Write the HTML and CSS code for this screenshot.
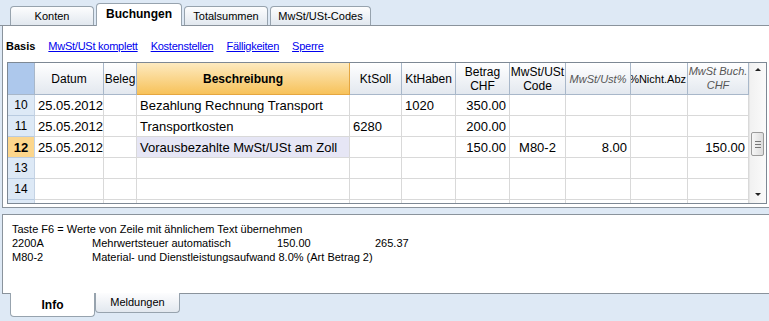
FILE: index.html
```html
<!DOCTYPE html>
<html lang="de">
<head>
  <meta charset="UTF-8">
  <title>Buchungen</title>
  <link rel="stylesheet" href="styles.css">
</head>
<body>
  <div class="top-tabs">
    <div class="tab">Konten</div>
    <div class="tab active">Buchungen</div>
    <div class="tab">Totalsummen</div>
    <div class="tab wide">MwSt/USt-Codes</div>
  </div>

  <div class="main-panel">
    <div class="links">
      <b>Basis</b>
      <a href="#">MwSt/USt komplett</a>
      <a href="#">Kostenstellen</a>
      <a href="#">Fälligkeiten</a>
      <a href="#">Sperre</a>
    </div>

    <div class="grid">
      <div class="table">
        <div class="row head">
          <div class="cell num"></div>
          <div class="cell">Datum</div>
          <div class="cell">Beleg</div>
          <div class="cell focus">Beschreibung</div>
          <div class="cell">KtSoll</div>
          <div class="cell">KtHaben</div>
          <div class="cell">Betrag<br>CHF</div>
          <div class="cell">MwSt/USt<br>Code</div>
          <div class="cell calc">MwSt/Ust%</div>
          <div class="cell clip"><span>%Nicht.Abz</span></div>
          <div class="cell calc top">MwSt Buch.<br>CHF</div>
        </div>
        <div class="row">
          <div class="cell num">10</div>
          <div class="cell">25.05.2012</div>
          <div class="cell"></div>
          <div class="cell">Bezahlung Rechnung Transport</div>
          <div class="cell"></div>
          <div class="cell">1020</div>
          <div class="cell r">350.00</div>
          <div class="cell"></div>
          <div class="cell"></div>
          <div class="cell"></div>
          <div class="cell"></div>
        </div>
        <div class="row">
          <div class="cell num">11</div>
          <div class="cell">25.05.2012</div>
          <div class="cell"></div>
          <div class="cell">Transportkosten</div>
          <div class="cell">6280</div>
          <div class="cell"></div>
          <div class="cell r">200.00</div>
          <div class="cell"></div>
          <div class="cell"></div>
          <div class="cell"></div>
          <div class="cell"></div>
        </div>
        <div class="row current">
          <div class="cell num">12</div>
          <div class="cell">25.05.2012</div>
          <div class="cell"></div>
          <div class="cell sel">Vorausbezahlte MwSt/USt am Zoll</div>
          <div class="cell"></div>
          <div class="cell"></div>
          <div class="cell r">150.00</div>
          <div class="cell c">M80-2</div>
          <div class="cell r">8.00</div>
          <div class="cell"></div>
          <div class="cell r">150.00</div>
        </div>
        <div class="row">
          <div class="cell num">13</div>
          <div class="cell"></div><div class="cell"></div><div class="cell"></div>
          <div class="cell"></div><div class="cell"></div><div class="cell"></div>
          <div class="cell"></div><div class="cell"></div><div class="cell"></div>
          <div class="cell"></div>
        </div>
        <div class="row">
          <div class="cell num">14</div>
          <div class="cell"></div><div class="cell"></div><div class="cell"></div>
          <div class="cell"></div><div class="cell"></div><div class="cell"></div>
          <div class="cell"></div><div class="cell"></div><div class="cell"></div>
          <div class="cell"></div>
        </div>
        <div class="row">
          <div class="cell num"></div>
          <div class="cell"></div><div class="cell"></div><div class="cell"></div>
          <div class="cell"></div><div class="cell"></div><div class="cell"></div>
          <div class="cell"></div><div class="cell"></div><div class="cell"></div>
          <div class="cell"></div>
        </div>
      </div>

      <div class="scrollbar">
        <div class="arrow up"></div>
        <div class="thumb"><span></span><span></span><span></span></div>
        <div class="arrow down"></div>
      </div>
    </div>
  </div>

  <div class="info-panel">
    <div class="info-line">Taste F6 = Werte von Zeile mit ähnlichem Text übernehmen</div>
    <div class="info-grid">
      <span>2200A</span><span>Mehrwertsteuer automatisch</span><span>150.00</span><span>265.37</span>
      <span>M80-2</span><span class="span3">Material- und Dienstleistungsaufwand 8.0% (Art Betrag 2)</span>
    </div>
  </div>

  <div class="bottom-tabs">
    <div class="btab active">Info</div>
    <div class="btab">Meldungen</div>
  </div>
</body>
</html>
```

FILE: styles.css
```css
body {
  margin: 0;
  width: 769px;
  height: 321px;
  overflow: hidden;
  background-color: #dee9f5;
  font-family: "Liberation Sans", Arial, sans-serif;
  font-size: 11px;
  color: #000;
}

/* top tab strip */
.top-tabs {
  height: 26px;
  box-sizing: border-box;
  padding-left: 10px;
  display: flex;
  align-items: flex-end;
  gap: 2px;
  border-bottom: 1px solid #8a939c;
}
.tab {
  width: 84px;
  height: 19px;
  box-sizing: border-box;
  border: 1px solid #97a3ae;
  border-bottom: none;
  border-radius: 4px 4px 0 0;
  background: linear-gradient(#fdfdfe, #e2e8ef);
  text-align: center;
  line-height: 19px;
  font-size: 11px;
}
.tab.active {
  width: 86px;
  height: 23px;
  margin-bottom: -1px;
  background: #fff;
  font-weight: bold;
  font-size: 12px;
  line-height: 20px;
  position: relative;
}
.tab.wide {
  width: 101px;
}

/* main panel */
.main-panel {
  margin-left: 2px;
  height: 182px;
  box-sizing: border-box;
  background: #fff;
  border-left: 1px solid #8a939c;
  border-bottom: 1px solid #8a939c;
}
.links {
  height: 36px;
  box-sizing: border-box;
  padding: 3px 0 0 3px;
  display: flex;
  align-items: center;
  gap: 13px;
}
.links a {
  color: #0000ee;
  text-decoration: underline;
  letter-spacing: -0.25px;
}

/* grid */
.grid {
  margin-left: 4px;
  width: 760px;
  height: 142px;
  box-sizing: border-box;
  border: 1px solid #7d8894;
  display: flex;
  overflow: hidden;
}
.table {
  width: 741px;
  flex: none;
}
.row {
  display: grid;
  grid-template-columns: 27px 69px 33px 213px 52px 54px 54px 56px 65px 57px 61px;
  height: 21px;
}
.cell {
  box-sizing: border-box;
  border-right: 1px solid #d9d9d9;
  border-bottom: 1px solid #d9d9d9;
  padding: 0 3px;
  font-size: 13px;
  line-height: 21px;
  white-space: nowrap;
  overflow: hidden;
}
.cell.r {
  text-align: right;
}
.cell.c {
  text-align: center;
}
.cell.num {
  background: #dde9f6;
  border-right-color: #c5d3e4;
  border-bottom-color: #b9cbe0;
  text-align: center;
  font-size: 12px;
}
.current .cell.num {
  background: #fcd68c;
  font-weight: bold;
  font-size: 13px;
}
.cell.sel {
  background: #e6e6f5;
}

.row.head {
  height: 32px;
}
.head .cell {
  background: linear-gradient(#ffffff, #e3e8ef);
  border-right-color: #a8b7c9;
  border-bottom-color: #a8b7c9;
  font-size: 12px;
  line-height: 14px;
  text-align: center;
  display: flex;
  align-items: center;
  justify-content: center;
  padding: 0 1px;
}
.head .cell.num {
  background: #adc8ec;
}
.head .cell.focus {
  background: linear-gradient(#fdeac0, #f7c25a);
  border-right-color: #e5a640;
  border-bottom-color: #e5a640;
  font-weight: bold;
}
.head .cell.calc {
  font-style: italic;
  font-size: 11px;
  color: #555;
}
.head .cell.top {
  align-items: flex-start;
  padding-top: 1px;
}
.head .cell.clip {
  justify-content: flex-end;
  font-size: 11px;
}
.head .cell.clip span {
  flex: none;
}

/* scrollbar */
.scrollbar {
  width: 17px;
  flex: none;
  background: linear-gradient(90deg, #f1f1f1, #fbfbfb);
  border-left: 1px solid #e6e6e6;
  position: relative;
}
.arrow {
  width: 0;
  height: 0;
  border-left: 3px solid transparent;
  border-right: 3px solid transparent;
  position: absolute;
  left: 5px;
}
.arrow.up {
  top: 5px;
  border-bottom: 3px solid #222;
}
.arrow.down {
  bottom: 7px;
  border-top: 3px solid #222;
}
.thumb {
  position: absolute;
  top: 69px;
  left: 1px;
  width: 13px;
  height: 24px;
  box-sizing: border-box;
  border: 1px solid #9a9a9a;
  border-radius: 2px;
  background: linear-gradient(90deg, #f6f6f6, #dcdcdc);
  display: flex;
  flex-direction: column;
  align-items: center;
  justify-content: center;
  gap: 2px;
}
.thumb span {
  width: 6px;
  height: 1px;
  background: #777;
}

/* info panel */
.info-panel {
  margin: 6px 0 0 2px;
  height: 80px;
  box-sizing: border-box;
  background: #fff;
  border-top: 1px solid #8a939c;
  border-left: 1px solid #8a939c;
  border-bottom: 1px solid #8a939c;
  padding: 7px 0 0 9px;
  line-height: 14px;
}
.info-grid {
  display: grid;
  grid-template-columns: 80px 185px 98px auto;
}
.info-grid .span3 {
  grid-column: span 3;
}

/* bottom tabs */
.bottom-tabs {
  padding-left: 10px;
  display: flex;
  align-items: flex-start;
  margin-top: -1px;
}
.btab {
  width: 85px;
  height: 20px;
  box-sizing: border-box;
  border: 1px solid #97a3ae;
  border-top: none;
  border-radius: 0 0 4px 4px;
  background: linear-gradient(#fdfdfe, #e2e8ef);
  text-align: center;
  line-height: 18px;
}
.btab.active {
  height: 24px;
  background: #fff;
  font-weight: bold;
  line-height: 24px;
  font-size: 12px;
}
```
